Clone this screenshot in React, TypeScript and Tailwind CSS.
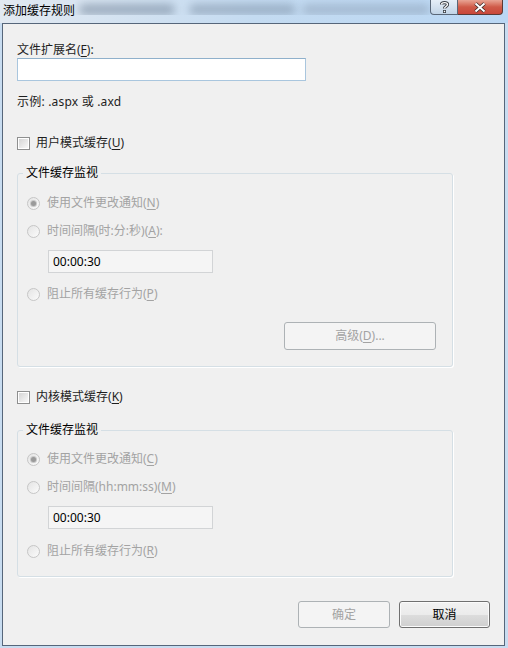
import React from 'react';

const font = "font-['Noto_Sans','Noto_Sans_CJK_SC',sans-serif]";

const Ul = ({ k }: { k: string }) => <span className="underline underline-offset-2">{k}</span>;

const CheckBox = ({ label, k }: { label: string; k: string }) => (
    <div className="flex items-center h-[16px] leading-[16px]">
        <div className="w-[13px] h-[13px] border border-[#8e8f8f] bg-white p-[1px]">
            <div className="w-full h-full bg-gradient-to-br from-[#d5d5d5] to-[#f8f8f8]" />
        </div>
        <span className="ml-[6px] text-[#1e1e1e]">
            {label}(<Ul k={k} />)
        </span>
    </div>
);

const Radio = ({ label, checked }: { label: React.ReactNode; checked?: boolean }) => (
    <div className="flex items-center h-[16px] leading-[16px]">
        <div className="w-[13px] h-[13px] rounded-full border border-[#c6c6c6] bg-gradient-to-br from-[#e4e4e4] to-[#fbfbfb] flex items-center justify-center">
            {checked && <div className="w-[5px] h-[5px] rounded-full bg-[#9a9a9a] shadow-[0_0_0_1px_#c9c9c9]" />}
        </div>
        <span className="ml-[7px] text-[#a3a3a3]">{label}</span>
    </div>
);

const TimeBox = () => (
    <div className="ml-[21px] w-[165px] h-[23px] border border-[#d2d4d6] bg-[#f5f5f5] flex items-center pl-[4px] text-black">
        00:00:30
    </div>
);

const Group = ({ children }: { children: React.ReactNode }) => (
    <fieldset className="w-[436px] border border-[#d5dfe5] rounded-[3px] shadow-[1px_1px_0_#ffffff] pl-[9px] pr-[16px] flex flex-col">
        <legend className="ml-[-4px] px-[3px] leading-[16px] text-black">文件缓存监视</legend>
        {children}
    </fieldset>
);

export default function App() {
    return (
        <div className={`w-[508px] h-[648px] bg-[#c8dcf0] text-[12px] ${font} overflow-hidden`}>
            {/* title bar */}
            <div className="h-[23px] flex items-start bg-gradient-to-r from-[#e2e9f1] via-[#c4dbf1] to-[#bad7f4]">
                <span className="pl-[3px] pt-[3px] leading-[16px] text-black whitespace-nowrap">添加缓存规则</span>
                <div className="flex-1 flex items-center pt-[4px] pl-[4px] overflow-hidden">
                    <div className="w-[112px] h-[11px] rounded-full bg-[#6f8196] opacity-55 blur-[4px]" />
                    <div className="ml-[14px] w-[125px] h-[11px] rounded-full bg-[#75889e] opacity-50 blur-[4px]" />
                    <div className="ml-[6px] w-[150px] h-[11px] rounded-full bg-[#8294aa] opacity-45 blur-[4px]" />
                </div>
                <div className="flex mr-[5px]">
                    <div className="w-[28px] h-[15px] border border-[#5a6778] border-t-0 rounded-bl-[4px] bg-gradient-to-b from-[#e6eef7] to-[#c2d4e6] flex items-center justify-center">
                        <svg width="9" height="12" viewBox="0 0 9 12">
                            <path d="M1.5 3.5 C1.5 1 7.5 1 7.5 3.5 C7.5 5.5 4.5 5.5 4.5 7.5" fill="none" stroke="#3a3f46" strokeWidth="3.2" />
                            <path d="M1.5 3.5 C1.5 1 7.5 1 7.5 3.5 C7.5 5.5 4.5 5.5 4.5 7.5" fill="none" stroke="#ffffff" strokeWidth="1.4" />
                            <rect x="3" y="9" width="3" height="3" fill="#3a3f46" />
                            <rect x="3.8" y="9.8" width="1.4" height="1.4" fill="#ffffff" />
                        </svg>
                    </div>
                    <div className="w-[45px] h-[15px] border border-[#5a3a36] border-t-0 border-l-0 rounded-br-[4px] bg-gradient-to-b from-[#e8a494] via-[#cf5a48] to-[#c9473a] flex items-center justify-center">
                        <svg width="14" height="11" viewBox="0 0 14 11">
                            <path d="M2.5 1.5 L11.5 9.5 M11.5 1.5 L2.5 9.5" stroke="#3b2b29" strokeWidth="3.6" />
                            <path d="M2.5 1.5 L11.5 9.5 M11.5 1.5 L2.5 9.5" stroke="#ffffff" strokeWidth="2" />
                        </svg>
                    </div>
                </div>
            </div>

            {/* client area */}
            <div className="ml-[2px] w-[503px] h-[623px] border border-[#56667a] bg-[#f0f0f0] flex flex-col pl-[14px] pr-[14px]">
                <div className="mt-[18px] leading-[16px] text-[#1e1e1e]">
                    文件扩展名(<Ul k="F" />):
                </div>
                <div className="w-[289px] h-[23px] border border-[#a9c6de] border-t-[#8fb0cb] bg-white" />
                <div className="mt-[13px] leading-[16px] text-[#1e1e1e] tracking-[0.2px]">示例: .aspx 或 .axd</div>

                <div className="mt-[25px]">
                    <CheckBox label="用户模式缓存" k="U" />
                </div>

                <div className="mt-[14px]">
                    <Group>
                        <div className="pt-[14px]">
                            <Radio checked label={<>使用文件更改通知(<Ul k="N" />)</>} />
                        </div>
                        <div className="mt-[12px]">
                            <Radio label={<>时间间隔(时:分:秒)(<Ul k="A" />):</>} />
                        </div>
                        <div className="mt-[11px]">
                            <TimeBox />
                        </div>
                        <div className="mt-[13px]">
                            <Radio label={<>阻止所有缓存行为(<Ul k="P" />)</>} />
                        </div>
                        <div className="mt-[20px] mb-[16px] flex justify-end">
                            <button type="button" className="w-[152px] h-[28px] border border-[#adb2b5] rounded-[3px] bg-[#f4f4f4] text-[#a3a3a3] leading-[16px]">
                                高级(<Ul k="D" />)...
                            </button>
                        </div>
                    </Group>
                </div>

                <div className="mt-[22px]">
                    <CheckBox label="内核模式缓存" k="K" />
                </div>

                <div className="mt-[17px]">
                    <Group>
                        <div className="pt-[13px]">
                            <Radio checked label={<>使用文件更改通知(<Ul k="C" />)</>} />
                        </div>
                        <div className="mt-[12px]">
                            <Radio label={<>时间间隔(hh:mm:ss)(<Ul k="M" />)</>} />
                        </div>
                        <div className="mt-[11px]">
                            <TimeBox />
                        </div>
                        <div className="mt-[14px] mb-[17px]">
                            <Radio label={<>阻止所有缓存行为(<Ul k="R" />)</>} />
                        </div>
                    </Group>
                </div>

                <div className="mt-[24px] flex justify-end gap-[9px]">
                    <button type="button" className="w-[92px] h-[27px] border border-[#adb2b5] rounded-[3px] bg-[#f4f4f4] text-[#a3a3a3] leading-[16px]">
                        确定
                    </button>
                    <button type="button" className="w-[91px] h-[27px] border border-[#707070] rounded-[3px] bg-[linear-gradient(to_bottom,#f2f2f2_0%,#ebebeb_50%,#dddddd_50%,#cfcfcf_100%)] shadow-[inset_0_0_0_1px_#fbfbfb] text-black leading-[16px]">
                        取消
                    </button>
                </div>
            </div>
        </div>
    );
}
